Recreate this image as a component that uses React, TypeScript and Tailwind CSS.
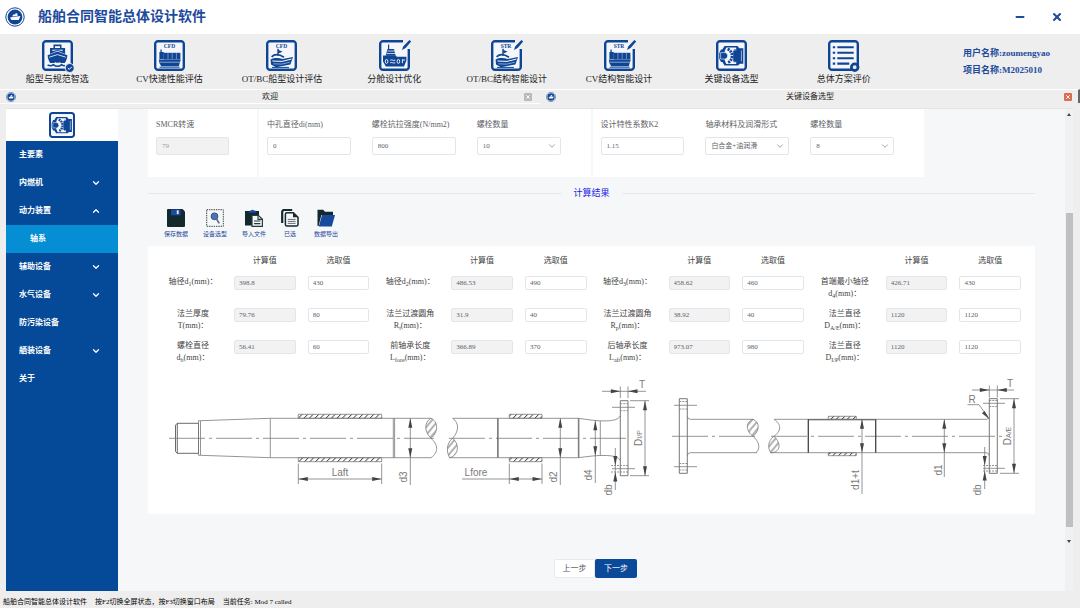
import type { ReactNode } from "react";
import { ChevronDown, ChevronUp, Minus, X } from "lucide-react";

const BLUE = "#0f4595";

/* ---------- icons ---------- */

function Logo({ className }: { className: string }) {
  return (
    <svg viewBox="0 0 20 20" className={className} aria-hidden="true">
      <circle cx="10" cy="10" r="9.2" fill="#fff" stroke={BLUE} strokeWidth="1" />
      <circle cx="10" cy="10" r="7.4" fill={BLUE} />
      <path d="M5 10.6l7-1.2 3.4-.4-1.6 4H6.4z" fill="#fff" />
      <path d="M7.2 9.6l1-2h2l.4-1.4h1.6l.4 2.8z" fill="#fff" />
    </svg>
  );
}

function Frame({ pen, tag, children }: { pen?: boolean; tag?: string; children: ReactNode }) {
  return (
    <svg viewBox="0 0 31 31" className="h-full w-full overflow-visible" aria-hidden="true">
      <path
        d={
          pen
            ? "M24 1.2H4a2.8 2.8 0 0 0-2.800 2.800v23a2.800 2.800 0 0 0 2.800 2.800h23a2.800 2.800 0 0 0 2.800-2.800V9"
            : "M4 1.2h23a2.8 2.8 0 0 1 2.8 2.8v23a2.8 2.8 0 0 1-2.8 2.8H4a2.8 2.8 0 0 1-2.8-2.8V4a2.8 2.8 0 0 1 2.8-2.8z"
        }
        fill="#f4f6fa"
        stroke={BLUE}
        strokeWidth="2.4"
      />
      {pen && <path d="M25 -1h8v9h-8z" fill="#eee" />}
      {pen && <path d="M30.4 0l1.8 1.600-5.600 6.400-3.600 2 1.200-3.400z" fill={BLUE} />}
      {tag && (
        <text
          x={pen ? 15 : 15.5}
          y="7.8"
          textAnchor="middle"
          fontSize="5.500"
          fontWeight="700"
          fontFamily="Liberation Serif, serif"
          fill={BLUE}
        >
          {tag}
        </text>
      )}
      {children}
    </svg>
  );
}

function FrontShip() {
  return (
    <Frame>
      <path d="M11.500 4.500h8V8h3.600v6L15.500 10.800 8 14V8h3.500z" fill={BLUE} />
      <path d="M13 6.200h5V8h-5zM10.400 9.800h10.200v1.200l-5.100-1-5.100 1z" fill="#fff" />
      <path d="M5.600 15.200l9.900-3.800 9.900 3.800c-.2 3.200-1.200 5.800-2.600 7.800-2.100.3-4 0-5.300-.8-1.200.8-2.800.8-4 0-1.300.8-3.200 1.100-5.300.8-1.400-2-2.400-4.600-2.600-7.800z" fill={BLUE} />
      <path d="M7.200 17.200l8.300-2.600 8.300 2.600" fill="none" stroke="#fff" strokeWidth=".8" />
      <path d="M5.600 25c2.200 1 4.200.8 5.800-.4 1.300 1.200 2.700 1.700 4.100 1.700s2.800-.5 4.100-1.700c1 .9 2 1.200 3.400 1" fill="none" stroke={BLUE} strokeWidth="1.500" />
      <circle cx="27.700" cy="28" r="4.500" fill={BLUE} stroke="#eee" strokeWidth="1" />
      <path d="M25.800 28l1.500 1.400 2.500-2.600" fill="none" stroke="#fff" strokeWidth="1" />
    </Frame>
  );
}

function CargoShip() {
  return (
    <>
      <path d="M6.400 9.500h1.300V12h2.100v7H5.400v-7h1z" fill={BLUE} />
      <path d="M9.800 12.800h16.600v6.600H9.800z" fill={BLUE} />
      <path d="M14 12.800v6.600M18.200 12.800v6.600M22.400 12.800v6.600" stroke="#c8d4e8" strokeWidth=".5" />
      <path d="M4.800 19.400h22l-2 6.800H7.200L5.400 23z" fill={BLUE} />
      <path d="M6 22.200h20" stroke="#dfe6f1" strokeWidth=".6" />
      <path d="M5.600 27.200h20" stroke={BLUE} strokeWidth="1" />
    </>
  );
}

function BowShip() {
  return (
    <>
      <path d="M12 8.800v7" stroke={BLUE} strokeWidth="1.400" />
      <path d="M12.200 9.800l4.400 2-4.400 1.800z" fill={BLUE} />
      <path d="M5.600 16.800c3.500-3.400 8-2.400 12.400.4" fill="none" stroke={BLUE} strokeWidth="1.700" />
      <path d="M4.600 19.600c4-2.200 8.400-1.600 12-.6l10.400-2-2.600 7.400L10 27.200l-5-2.600z" fill={BLUE} />
      <path d="M6.400 21l9.600.4 9.400-2.300" fill="none" stroke="#fff" strokeWidth="1" />
      <path d="M7.400 23.800l8.400.3 8-1.900" fill="none" stroke="#fff" strokeWidth=".5" />
      <path d="M6 27.400h17" stroke={BLUE} strokeWidth="1" />
    </>
  );
}

function HoldShip() {
  return (
    <Frame pen>
      <path d="M10.200 4.500V9h4.800l1.600 6.800H6.800L8.400 9h.6V4.500z" fill={BLUE} />
      <path d="M8.400 11h7.400M7.800 13.500h8.800" stroke="#eee" strokeWidth=".8" />
      <path d="M4 15.600h12.800l1 1.200h9.600V20.600l-2.400 6H6.800L4 21.500z" fill={BLUE} />
      <g fill="none" stroke="#eee" strokeWidth="1">
        <ellipse cx="7.600" cy="21.400" rx="1.300" ry="2" />
        <ellipse cx="19.400" cy="21.400" rx="1.300" ry="2" />
        <path d="M11.200 20.200c1.500-1 3 .8 5 0M11.200 22.800c1.500-1 3 .8 5 0M23.400 19.200v4M25 19v2" />
      </g>
    </Frame>
  );
}

function Engine() {
  return (
    <Frame>
      <path d="M8.500 6h13l1.800 2.200h4v15.600h-3.400L22 25.400H8.500L6.400 22H5l-1.800-3.400v-5.400L5 9.600h1.400z" fill={BLUE} />
      <path d="M10.400 7.600h9.800v3h-3v10.800h3V24h-9.800C8.800 21.400 8.200 18.800 8.200 15.800s.6-5.600 2.200-8.200z" fill="#f4f6fa" />
      <path d="M4.600 12.600h4.800a3.400 3.400 0 0 1 0 6.400H4.600z" fill={BLUE} stroke="#f4f6fa" strokeWidth=".6" />
      <path d="M11.600 9c6 2.600 6 11.200 0 13.800" fill="none" stroke={BLUE} strokeWidth="2.800" strokeDasharray="2.100 .8" />
      <path d="M17.800 9.800h2v12h-2" fill="none" stroke={BLUE} strokeWidth=".8" />
      <path d="M25.400 10.400v11" stroke="#f4f6fa" strokeWidth=".6" />
    </Frame>
  );
}

function ListIcon() {
  return (
    <Frame>
      {[7.3, 12.7, 18.2, 23.6].map((y) => (
        <path key={y} d={`M4.800 ${y}h2.400M9.300 ${y}h${y > 20 ? 12 : 16.4}`} stroke={BLUE} strokeWidth="2.100" />
      ))}
      <circle cx="26.700" cy="27.200" r="3.300" fill="#eee" stroke={BLUE} strokeWidth="2.800" />
    </Frame>
  );
}

function SaveIcon() {
  return (
    <svg viewBox="0 0 18 18" className="size-[18px]" aria-hidden="true">
      <path d="M1 0h14.500L18 2.500V17a1 1 0 0 1-1 1H1a1 1 0 0 1-1-1V1a1 1 0 0 1 1-1z" fill="#14292e" />
      <path d="M4 .5h9.500v5.800H4z" fill="#1d4aa3" />
      <path d="M9.800 1.300h1.800v3.800H9.800z" fill="#e8edf4" />
    </svg>
  );
}

function SelectIcon() {
  return (
    <svg viewBox="0 0 18 18" className="size-[18px]" aria-hidden="true">
      <path d="M.7.7h16.600v16.600H.7z" fill="none" stroke="#3d4649" strokeWidth="1" strokeDasharray="1.400 .9" />
      <circle cx="8.500" cy="7.300" r="3.400" fill="#4a76b8" stroke="#3f556d" strokeWidth="1" />
      <path d="M10.600 10l2.600 4.400" stroke="#5b6f86" strokeWidth="1.700" />
    </svg>
  );
}

function PasteIcon() {
  return (
    <svg viewBox="0 0 18 18" className="size-[18px]" aria-hidden="true">
      <path d="M0 2h14v5H7v9.500H0z" fill="#14292e" />
      <path d="M3.500 3.800L5 1.600h1.200a1.500 1.500 0 0 1 2.800 0h1.200l1.400 2.200z" fill="#1d4aa3" />
      <path d="M7 6.400h6.400l4 3.800v7.200H7z" fill="#f5f7f9" stroke="#263a40" strokeWidth="1.200" />
      <path d="M13 6.400v4h4.400M9 12h6.400M9 14.600h6.400" fill="none" stroke="#263a40" strokeWidth="1.100" />
    </svg>
  );
}

function PickedIcon() {
  return (
    <svg viewBox="0 0 18 18" className="size-[18px]" aria-hidden="true">
      <path d="M1.200 14V3a2 2 0 0 1 2-2h8" fill="none" stroke="#14292e" strokeWidth="2.200" />
      <path d="M6 3.800h6.400l4.600 4.400v7.200a1.600 1.600 0 0 1-1.600 1.600H6a1.600 1.600 0 0 1-1.600-1.600V5.400A1.600 1.600 0 0 1 6 3.800z" fill="#f5f7f9" stroke="#14292e" strokeWidth="1.500" />
      <path d="M12 3.800v4.400h5z" fill="#14292e" />
      <path d="M6.800 10.400h7.800M6.800 12.400h7.800M6.800 14.400h7.800" stroke="#555f63" strokeWidth=".9" />
    </svg>
  );
}

function FolderIcon() {
  return (
    <svg viewBox="0 0 18 18" className="size-[18px]" aria-hidden="true">
      <path d="M.5.7h5.800l1.600 2H16V6H4.400L1.600 17H.5z" fill="#14292e" />
      <path d="M5 6h13l-3.200 11.400H1.800z" fill="#164a9f" />
    </svg>
  );
}

/* ---------- data ---------- */

const modules = [
  { label: "船型与规范智选", icon: <FrontShip /> },
  { label: "CV快速性能评估", icon: <Frame tag="CFD"><CargoShip /></Frame> },
  { label: "OT/BC船型设计评估", icon: <Frame tag="CFD"><BowShip /></Frame> },
  { label: "分舱设计优化", icon: <HoldShip /> },
  { label: "OT/BC结构智能设计", icon: <Frame pen tag="STR"><BowShip /></Frame> },
  { label: "CV结构智能设计", icon: <Frame pen tag="STR"><CargoShip /></Frame> },
  { label: "关键设备选型", icon: <Engine /> },
  { label: "总体方案评价", icon: <ListIcon /> },
];

const menu = [
  { label: "主要素" },
  { label: "内燃机", arrow: "down" },
  { label: "动力装置", arrow: "up" },
  { label: "轴系", active: true },
  { label: "辅助设备", arrow: "down" },
  { label: "水气设备", arrow: "down" },
  { label: "防污染设备" },
  { label: "舾装设备", arrow: "down" },
  { label: "关于" },
];

const actions = [
  { label: "保存数据", icon: <SaveIcon /> },
  { label: "设备选型", icon: <SelectIcon /> },
  { label: "导入文件", icon: <PasteIcon /> },
  { label: "已选", icon: <PickedIcon /> },
  { label: "数据导出", icon: <FolderIcon /> },
];

type Row = { name: string; sym: string; sub?: string; calc: string; pick: string };

const groups: Row[][] = [
  [
    { name: "轴径", sym: "d", sub: "1", calc: "398.8", pick: "430" },
    { name: "法兰厚度", sym: "T", calc: "79.76", pick: "80" },
    { name: "螺栓直径", sym: "d", sub: "b", calc: "56.41", pick: "60" },
  ],
  [
    { name: "轴径", sym: "d", sub: "2", calc: "486.53", pick: "490" },
    { name: "法兰过渡圆角", sym: "R", sub: "t", calc: "31.9", pick: "40" },
    { name: "前轴承长度", sym: "L", sub: "fore", calc: "366.89", pick: "370" },
  ],
  [
    { name: "轴径", sym: "d", sub: "3", calc: "458.62", pick: "460" },
    { name: "法兰过渡圆角", sym: "R", sub: "p", calc: "38.92", pick: "40" },
    { name: "后轴承长度", sym: "L", sub: "aft", calc: "973.07", pick: "980" },
  ],
  [
    { name: "首端最小轴径", sym: "d", sub: "4", calc: "426.71", pick: "430" },
    { name: "法兰直径", sym: "D", sub: "A/E", calc: "1120", pick: "1120" },
    { name: "法兰直径", sym: "D", sub: "I/P", calc: "1120", pick: "1120" },
  ],
];

/* ---------- form pieces ---------- */

function TextField({ id, label, value, disabled }: { id: string; label: string; value: string; disabled?: boolean }) {
  return (
    <div className="flex min-w-0 flex-1 flex-col gap-1.5">
      <label htmlFor={id} className="text-[8px] leading-3 whitespace-nowrap text-[#606266]">
        {label}
      </label>
      <input
        id={id}
        defaultValue={value}
        disabled={disabled}
        className="h-[18px] w-full rounded-xs border border-[#e2e5ea] bg-white px-[5px] text-[7px] text-[#606266] disabled:bg-[#f2f2f2] disabled:text-[#9a9da3]"
      />
    </div>
  );
}

function SelectField({ id, label, value }: { id: string; label: string; value: string }) {
  return (
    <div className="flex min-w-0 flex-1 flex-col gap-1.5">
      <label htmlFor={id} className="text-[8px] leading-3 whitespace-nowrap text-[#606266]">
        {label}
      </label>
      <div className="relative">
        <select
          id={id}
          defaultValue={value}
          className="block h-[18px] w-full appearance-none rounded-xs border border-[#e2e5ea] bg-white px-[5px] text-[7px] text-[#606266]"
        >
          <option>{value}</option>
        </select>
        <ChevronDown className="pointer-events-none absolute top-1 right-1 size-2.5 text-[#8f9399]" strokeWidth={2} />
      </div>
    </div>
  );
}

function ResultGroup({ rows, index }: { rows: Row[]; index: number }) {
  const box = "h-3.5 w-full min-w-0 rounded-xs border border-[#e2e5ea] px-1 text-[7px] text-[#606266]";
  return (
    <div className="grid grid-cols-[58px_1fr_1fr] gap-x-3 gap-y-2">
      <span />
      <span className="text-center text-[8px] leading-[14px]">计算值</span>
      <span className="text-center text-[8px] leading-[14px]">选取值</span>
      {rows.map((row, i) => {
        const id = `result-${index}-${i}`;
        return (
          <div key={id} className="col-span-3 grid min-h-6 grid-cols-subgrid items-start">
            <label htmlFor={id} className="flex flex-wrap justify-center text-[8px] leading-3">
              <span>{row.name}</span>
              <span className="whitespace-nowrap">
                {row.sym}
                {row.sub && <sub className="text-[6px]">{row.sub}</sub>}
                (mm)：
              </span>
            </label>
            <input aria-label={`${row.name} 计算值`} defaultValue={row.calc} readOnly className={`${box} bg-[#f2f2f2]`} />
            <input id={id} defaultValue={row.pick} className={`${box} bg-white`} />
          </div>
        );
      })}
    </div>
  );
}

/* ---------- shaft drawing ---------- */

function Arrow({ x, y, dir }: { x: number; y: number; dir: "up" | "down" | "left" | "right" }) {
  const angle = { up: 0, right: 90, down: 180, left: 270 }[dir];
  return <path d="M0 0l2 9.500h-4z" transform={`translate(${x} ${y}) rotate(${angle})`} fill="#444" stroke="none" />;
}

function Note({ x, y, turn, children }: { x: number; y: number; turn?: boolean; children: ReactNode }) {
  return (
    <text
      x={x}
      y={y}
      transform={turn ? `rotate(-90 ${x} ${y})` : undefined}
      textAnchor="middle"
      fontSize="10"
      fontFamily="Liberation Sans, sans-serif"
      fill="#7a7a7a"
      stroke="none"
    >
      {children}
    </text>
  );
}

function ShaftDrawing() {
  return (
    <svg viewBox="148 368 887 140" className="mt-1 w-full" role="img" aria-label="轴系">
      <defs>
        <pattern id="hatch" width="5.500" height="4" patternUnits="userSpaceOnUse" patternTransform="skewX(-45)">
          <path d="M1.500 0v4" stroke="#444" strokeWidth="1.200" />
        </pattern>
        <pattern id="section" width="5" height="5" patternUnits="userSpaceOnUse" patternTransform="rotate(40)">
          <path d="M1 0v5" stroke="#666" strokeWidth="1" />
        </pattern>
      </defs>

      <g fill="none" stroke="#7a7a7a" strokeWidth=".8">
        {/* propeller shaft, aft part */}
        <path d="M177.300 423.300H198.500v30H177.300l-1.800-1.800v-26.400zM177.300 423.300v30" stroke="#444" />
        <path d="M198.500 420.700h2v34.600h-2zM200.500 420.700l69.800-2.400H431M200.500 455.300l69.800 2.400H431M270.300 418.300v39.400" />
        <path d="M393.300 418.300v39.400M394.600 418.300v39.400" />
        <path d="M431 418.300c-7 4-7 13 0 20 8-7 7-17 0-20z" fill="url(#section)" />
        <path d="M431 438.300c7 6 8 14 0 19.400" />
        <path d="M169 438.300H434M449 438.300H630" strokeDasharray="36 4 3 4" />
        <path d="M298.300 414.300h83.400v4h-83.400zM298.300 457.700h83.400v4h-83.400z" fill="url(#hatch)" />
        <path d="M298.300 463.500V484M381.700 463.500V484M298.300 479h83.400M410.300 418.300V485" />

        {/* propeller shaft, fore part */}
        <path d="M452.700 418.300H578.300M449.500 457.700H578.300M498.300 418.300v39.400M578.300 418.300v39.400M600.300 421v34.500" />
        <path d="M497.600 418.300v39.400M578.900 418.300v39.400" stroke="#555" />
        <path d="M452.700 418.300c7 5 6 13 0 20" />
        <path d="M452.700 438.300c-7 5-6 15-3 19.400 8-2 11-12 3-19.400z" fill="url(#section)" />
        <path d="M509.300 414.300H542v4h-32.700zM509.300 457.700H542v4h-32.700z" fill="url(#hatch)" />
        <path d="M462 479h80M509.300 463.500V484M542 463.500V484M560.300 418.300V485M595.300 420.700V483" />
        <path d="M578.300 418.300c10 1.200 18 3 28 2.600 8-.3 12-1.600 14-5M578.300 457.700c10-1.200 18-2.600 28-2.200 8 .3 12 1.600 14 5" />
        <path d="M620.300 400.700h7.700v75h-7.700z" stroke="#555" />
        <path d="M612 407.300h23M612 468.700h23" />
        <path d="M620.300 403.700h7.700M620.300 410.700h7.700M611 465.500h17M611 472h17" strokeDasharray="2 1" />
        <path d="M602 391.300h44M620.300 386.500V398M628 386.500V398M630 400.700h19M630 475.700h19M645 400.700v75M615.300 448V490" />

        {/* intermediate shaft */}
        <path d="M679.300 398.700h8v74.600h-8zM989.300 398.700h8v74.600h-8z" stroke="#555" />
        <path d="M674 405.300h23M674 466.700h23M983 403.300h22M983 468.300h22" />
        <path d="M679.300 401.500h8M679.300 409h8M679.300 463.500h8M679.300 470h8M989.300 400.500h8M989.300 406.500h8M983 465.500h14M983 471h14" strokeDasharray="2 1" />
        <path d="M687.300 416.500q.6 2.800 3 2.800H753M687.300 455.500q.6-2.800 3-2.800H757M774 419.300H986q3 0 3.300-2.500M770 452.700H986q3 0 3.300 3" />
        <path d="M753 419.300c-8 3-7 12 0 17 7-6 7-14 0-17z" fill="url(#section)" />
        <path d="M753 436.300c6 5 8 12 3 16.400" />
        <path d="M774 419.300c8 5 7 12 0 17" />
        <path d="M774 436.300c-7 5-6 13-3 16.400 9 0 11-9 3-16.400z" fill="url(#section)" />
        <path d="M672 436.300H758M771 436.300H1004" strokeDasharray="36 4 3 4" />
        <path d="M808.300 419.300v33.400M875.700 419.300v33.400" stroke="#444" strokeWidth="1.300" />
        <path d="M808.300 419.800h67.400" stroke="#444" />
        <path d="M828.300 416.300h28v3h-28zM828.300 452.700h28v3h-28z" fill="url(#hatch)" />
        <path d="M862 419.300V494M944.300 419.300V477" />
        <path d="M972 390h42M989.300 385.500v12M997.300 385.500v12M1000 398.700h19M1000 473.300h19M1014 398.700v74.600M984.700 447v42" />
        <path d="M967.500 404.700h11.500l9 12.500" />
        <path d="M989.500 419.300l-7.500-6 2.600-2.400z" fill="#444" stroke="none" />
      </g>

      <Arrow x={298.3} y={479} dir="left" />
      <Arrow x={381.7} y={479} dir="right" />
      <Arrow x={410.3} y={418.3} dir="up" />
      <Arrow x={410.3} y={457.7} dir="down" />
      <Arrow x={509.3} y={479} dir="left" />
      <Arrow x={542} y={479} dir="right" />
      <Arrow x={560.3} y={418.3} dir="up" />
      <Arrow x={560.3} y={457.7} dir="down" />
      <Arrow x={595.3} y={420.7} dir="up" />
      <Arrow x={595.3} y={455.7} dir="down" />
      <Arrow x={620.3} y={391.3} dir="right" />
      <Arrow x={628} y={391.3} dir="left" />
      <Arrow x={645} y={400.7} dir="up" />
      <Arrow x={645} y={475.7} dir="down" />
      <Arrow x={615.3} y={465.5} dir="down" />
      <Arrow x={615.3} y={472} dir="up" />
      <Arrow x={862} y={419.3} dir="up" />
      <Arrow x={862} y={452.7} dir="down" />
      <Arrow x={944.3} y={419.3} dir="up" />
      <Arrow x={944.3} y={452.7} dir="down" />
      <Arrow x={989.3} y={390} dir="right" />
      <Arrow x={997.3} y={390} dir="left" />
      <Arrow x={1014} y={398.7} dir="up" />
      <Arrow x={1014} y={473.3} dir="down" />
      <Arrow x={984.7} y={465.5} dir="down" />
      <Arrow x={984.7} y={471} dir="up" />

      <Note x={340} y={476}>Laft</Note>
      <Note x={476} y={476}>Lfore</Note>
      <Note x={407} y={477} turn>d3</Note>
      <Note x={557} y={477} turn>d2</Note>
      <Note x={592} y={475} turn>d4</Note>
      <Note x={642} y={388}>T</Note>
      <Note x={642} y={438} turn>D<tspan fontSize="7">I/P</tspan></Note>
      <Note x={612} y={490} turn>db</Note>
      <Note x={859} y={480} turn>d1+t</Note>
      <Note x={942} y={470} turn>d1</Note>
      <Note x={1010} y={387}>T</Note>
      <Note x={972} y={403}>R</Note>
      <Note x={1011} y={436} turn>D<tspan fontSize="7">A/E</tspan></Note>
      <Note x={981} y={490} turn>db</Note>
    </svg>
  );
}

/* ---------- page ---------- */

function WindowTab({ title, active }: { title: string; active?: boolean }) {
  return (
    <div
      className={`flex h-[14px] flex-1 items-center border-t border-t-white pl-[6px] ${
        active ? "border-r-2 border-r-[#666] pr-[6px]" : "pr-2 shadow-[0_1px_0_#fff]"
      }`}
    >
      <Logo className="size-[10px]" />
      <span className="flex-1 text-center text-[8px] leading-3">{title}</span>
      <button
        type="button"
        aria-label="关闭"
        className={`grid size-2 place-items-center rounded-[1px] text-white ${active ? "bg-[#dd6b4d]" : "bg-[#b9b9b9]"}`}
      >
        <X className="size-1.5" strokeWidth={4} />
      </button>
    </div>
  );
}

function Sidebar() {
  return (
    <aside className="flex w-28 shrink-0 flex-col bg-[#054a98]">
      <div className="flex h-8 items-center justify-center bg-white">
        <div className="size-[26px]">
          <Engine />
        </div>
      </div>
      <nav className="flex flex-col">
        {menu.map((item) => (
          <a
            key={item.label}
            href="#"
            className={`flex h-7 items-center justify-between pr-[17px] text-[8px] font-bold text-white ${
              item.active ? "bg-[#058ed4] pl-6" : "pl-[13px]"
            }`}
          >
            {item.label}
            {item.arrow === "down" && <ChevronDown className="size-2.5" strokeWidth={3} />}
            {item.arrow === "up" && <ChevronUp className="size-2.5" strokeWidth={3} />}
          </a>
        ))}
      </nav>
    </aside>
  );
}

function ScrollTrack() {
  return (
    <div className="flex w-2 shrink-0 flex-col items-center bg-[#f0f1f1] pt-1" aria-hidden="true">
      <svg viewBox="0 0 4 3" className="h-[3px] w-1">
        <path d="M2 0l2 3H0z" fill="#444" />
      </svg>
      <span className="grow-[97]" />
      <span className="w-[7px] grow-[313] bg-[#bfc0c0]" />
      <span className="grow-[13]" />
      <svg viewBox="0 0 4 3" className="h-[3px] w-1">
        <path d="M0 0h4L2 3z" fill="#444" />
      </svg>
      <span className="grow-[48]" />
    </div>
  );
}

export default function App() {
  return (
    <div className="flex min-h-screen flex-col bg-[#eee] font-['Liberation_Serif','Noto_Sans_CJK_SC',serif] text-[#222]">
      <header className="flex h-[34px] items-center bg-white pr-[17px] pl-[5px] text-[#1d4a9c]">
        <Logo className="size-5" />
        <h1 className="ml-[13px] flex-1 text-sm font-bold">船舶合同智能总体设计软件</h1>
        <button type="button" aria-label="最小化" className="mr-[25px]">
          <Minus className="size-3" strokeWidth={4} />
        </button>
        <button type="button" aria-label="关闭">
          <X className="size-3" strokeWidth={4} />
        </button>
      </header>

      <div className="flex items-center">
        <nav className="grid w-5/6 grid-cols-8 pt-1.5 pb-1 pl-px">
          {modules.map((m) => (
            <a key={m.label} href="#" className="flex flex-col items-center gap-0.5">
              <span className="size-[31px]">{m.icon}</span>
              <span className="text-[9px] leading-3 whitespace-nowrap">{m.label}</span>
            </a>
          ))}
        </nav>
        <div className="w-1/6 pl-[63px] text-[9px] leading-[17px] font-bold whitespace-nowrap text-[#1d4a9c]">
          <p>用户名称:zoumengyao</p>
          <p>项目名称:M2025010</p>
        </div>
      </div>

      <div className="flex">
        <WindowTab title="欢迎" />
        <WindowTab title="关键设备选型" active />
      </div>

      <div className="mt-[5px] mr-[7px] mb-[5px] ml-1.5 flex flex-1 border-t border-[#e4e4e4]">
        <Sidebar />
        <main className="min-w-0 flex-1 bg-[#f5f7f9] px-[30px] pb-3">
          <div className="grid w-7/8 grid-cols-[109fr_332fr_332fr] gap-x-0.5">
            <div className="flex bg-white pt-2.5 pr-7 pb-[22px] pl-2">
              <TextField id="smcr" label="SMCR转速" value="79" disabled />
            </div>
            <div className="flex gap-[21px] bg-white pt-2.5 pr-[30px] pb-[22px] pl-2">
              <TextField id="bore" label="中孔直径di(mm)" value="0" />
              <TextField id="tensile" label="螺栓抗拉强度(N/mm2)" value="800" />
              <SelectField id="bolts-a" label="螺栓数量" value="10" />
            </div>
            <div className="flex gap-[21px] bg-white pt-2.5 pr-[30px] pb-[22px] pl-2">
              <TextField id="k2" label="设计特性系数K2" value="1.15" />
              <SelectField id="bearing" label="轴承材料及润滑形式" value="白合金+油润滑" />
              <SelectField id="bolts-b" label="螺栓数量" value="8" />
            </div>
          </div>

          <div className="mt-2.5 flex items-center gap-3">
            <span className="h-px flex-1 bg-[#e6e9ec]" />
            <h2 className="text-[9px] leading-3 text-[#2222e6]">计算结果</h2>
            <span className="h-px flex-1 bg-[#e6e9ec]" />
          </div>

          <div className="mt-2.5 flex gap-[15px] pl-4">
            {actions.map((a) => (
              <button key={a.label} type="button" className="flex flex-col items-center gap-[3px]">
                {a.icon}
                <span className="text-[6px] leading-2 text-[#27479a]">{a.label}</span>
              </button>
            ))}
          </div>

          <section className="mt-2 bg-white pt-2 pb-1.5 text-[#444]">
            <div className="grid grid-cols-4 gap-x-3 pr-3.5 pl-4">
              {groups.map((rows, i) => (
                <ResultGroup key={i} rows={rows} index={i} />
              ))}
            </div>
            <ShaftDrawing />
          </section>

          <div className="mt-[45px] flex justify-center pl-2 text-[8px]">
            <button type="button" className="h-[19px] w-[41px] rounded-xs border border-[#e8eaed] bg-white text-[#555]">
              上一步
            </button>
            <button type="button" className="h-[19px] w-[42px] rounded-xs bg-[#0b4a99] text-white">
              下一步
            </button>
          </div>
        </main>
        <ScrollTrack />
      </div>

      <footer className="flex h-3 items-center gap-2 px-[3px] text-[7px] text-black">
        <span>船舶合同智能总体设计软件</span>
        <span>按F2切换全屏状态，按F3切换窗口布局</span>
        <span>当前任务: Mod 7 called</span>
      </footer>
    </div>
  );
}
